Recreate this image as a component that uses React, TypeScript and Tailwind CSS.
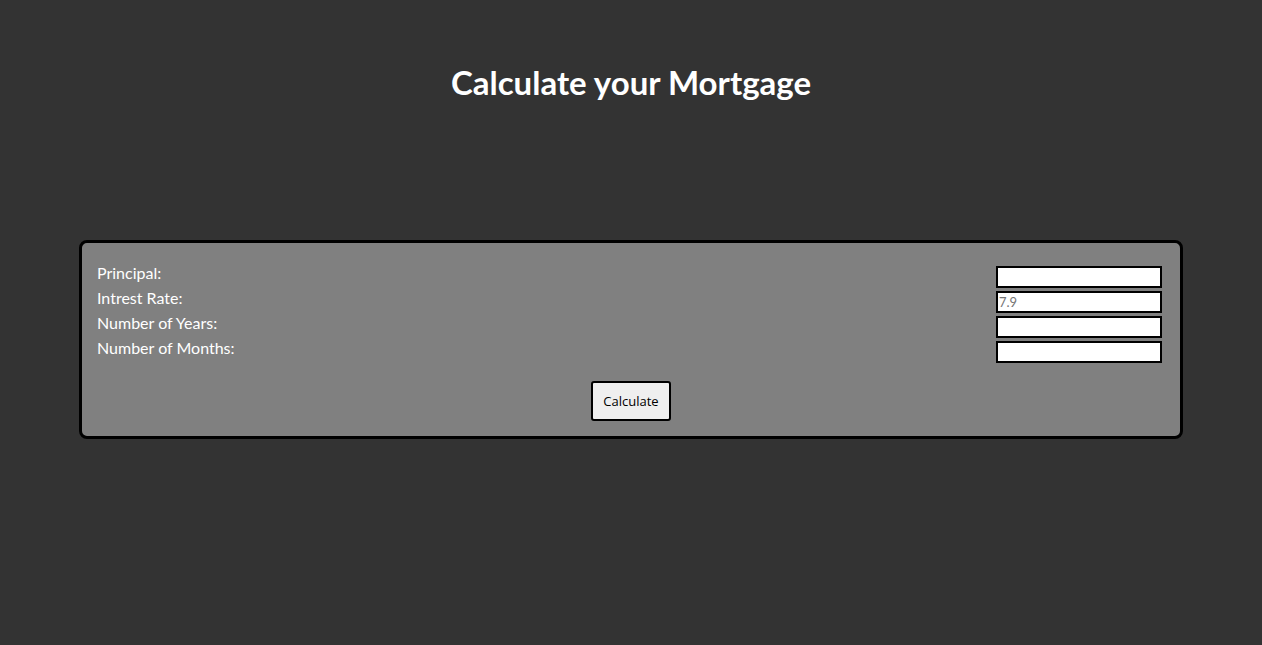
import { useState } from "react";

export default function App() {
  const [principal, setPrincipal] = useState("");
  const [rate, setRate] = useState("");
  const [years, setYears] = useState("");
  const [months, setMonths] = useState("");

  const labels = ["Principal:", "Intrest Rate:", "Number of Years:", "Number of Months:"];
  const fields = [
    { value: principal, set: setPrincipal, placeholder: "" },
    { value: rate, set: setRate, placeholder: "7.9" },
    { value: years, set: setYears, placeholder: "" },
    { value: months, set: setMonths, placeholder: "" },
  ];

  return (
    <div className="min-h-[645px] w-full bg-[#333333] font-['Lato','Open_Sans',sans-serif] pt-[62px]">
      <h1 className="text-center text-[33px] font-bold leading-[40px] text-white">Calculate your Mortgage</h1>

      <div className="mx-[79px] mt-[138px] rounded-[8px] border-[3px] border-black bg-[#808080] pl-[15px] pr-[18px] pt-[23px] pb-[15px]">
        <div className="flex justify-between">
          <div className="flex flex-col -mt-[6px]">
            {labels.map((l) => (
              <div key={l} className="h-[25px] text-[16px] leading-[25px] text-white">{l}</div>
            ))}
          </div>
          <div className="flex flex-col gap-[3px]">
            {fields.map((f, i) => (
              <input
                key={i}
                type="text"
                value={f.value}
                placeholder={f.placeholder}
                onChange={(e) => f.set(e.target.value)}
                className="h-[22px] w-[166px] border-2 border-black bg-white px-[1px] font-['Lato',sans-serif] text-[13px] text-black placeholder:text-[#757575] outline-none"
              />
            ))}
          </div>
        </div>
        <div className="mt-[18px] flex justify-center pl-[3px]">
          <button className="h-[40px] w-[80px] rounded-[3px] border-2 border-black bg-[#efefef] pt-[1px] font-['Open_Sans',sans-serif] text-[13px] text-black">
            Calculate
          </button>
        </div>
      </div>
    </div>
  );
}
